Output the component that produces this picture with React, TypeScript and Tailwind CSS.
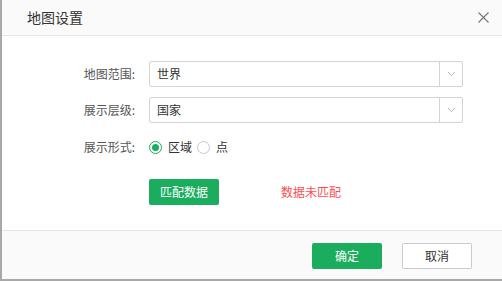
import React from 'react';

const font = { fontFamily: '"Noto Sans CJK SC", "Liberation Sans", sans-serif' };

const Chevron = () => (
  <svg width="9" height="6" viewBox="0 0 9 6" fill="none">
    <path d="M1 1l3.5 3.5L8 1" stroke="#b5b5b5" strokeWidth="1" />
  </svg>
);

const Select: React.FC<{ value: string }> = ({ value }) => (
  <div className="flex h-[26px] w-[314px] items-stretch rounded-[2px] border border-[#d4d4d4] bg-white">
    <div className="flex flex-1 items-center pl-[7px] text-[12px] text-[#333]">{value}</div>
    <div className="flex w-[23px] items-center justify-center border-l border-[#d4d4d4]">
      <Chevron />
    </div>
  </div>
);

const Row: React.FC<{ label: string; children: React.ReactNode; className?: string }> = ({ label, children, className }) => (
  <div className={'flex h-[26px] items-center ' + (className ?? '')}>
    <span className="w-[80px] shrink-0 pr-[2px] text-right text-[12px] text-[#555]">{label}</span>
    <div className="ml-[12px] flex items-center">{children}</div>
  </div>
);

const Radio: React.FC<{ checked?: boolean; label: string }> = ({ checked, label }) => (
  <label className="flex items-center">
    <span
      className={
        'flex h-[13px] w-[13px] items-center justify-center rounded-full border bg-white ' +
        (checked ? 'border-[#1aad5e]' : 'border-[#c8c8c8]')
      }
    >
      {checked && <span className="h-[7px] w-[7px] rounded-full bg-[#1aad5e]" />}
    </span>
    <span className="ml-[6px] text-[12px] text-[#333]">{label}</span>
  </label>
);

export default function App() {
  return (
    <div className="flex h-[281px] w-[502px] flex-col border-b-2 border-l-2 border-[#a8a8a8] bg-white" style={font}>
      <header className="flex h-[36px] shrink-0 items-center justify-between border-b border-[#e6e6e6] bg-[#fafafa] pl-[25px] pr-[12px]">
        <h1 className="text-[14px] text-[#333]">地图设置</h1>
        <svg width="11" height="11" viewBox="0 0 11 11" className="mr-[1px]">
          <path d="M0.5 0.5l10 10M10.5 0.5l-10 10" stroke="#777" strokeWidth="1.1" />
        </svg>
      </header>

      <div className="flex-1 pl-[55px] pt-[25px]">
        <Row label="地图范围:">
          <Select value="世界" />
        </Row>
        <Row label="展示层级:" className="mt-[10px]">
          <Select value="国家" />
        </Row>
        <Row label="展示形式:" className="mt-[11px]">
          <div className="flex items-center gap-[5px]">
            <Radio checked label="区域" />
            <Radio label="点" />
          </div>
        </Row>
        <div className="mt-[19px] flex items-center pl-[92px]">
          <button className="h-[26px] w-[70px] rounded-[2px] bg-[#1aad5e] text-[12px] text-white">匹配数据</button>
          <span className="ml-[62px] text-[12px] text-[#ff4d4f]">数据未匹配</span>
        </div>
      </div>

      <footer className="flex h-[49px] shrink-0 items-start justify-end gap-[20px] border-t border-[#e6e6e6] bg-[#fafafa] pr-[30px] pt-[12px]">
        <button className="h-[26px] w-[70px] rounded-[2px] bg-[#1aad5e] text-[12px] text-white">确定</button>
        <button className="h-[26px] w-[70px] rounded-[2px] border border-[#ccc] bg-white text-[12px] text-[#333]">取消</button>
      </footer>
    </div>
  );
}
